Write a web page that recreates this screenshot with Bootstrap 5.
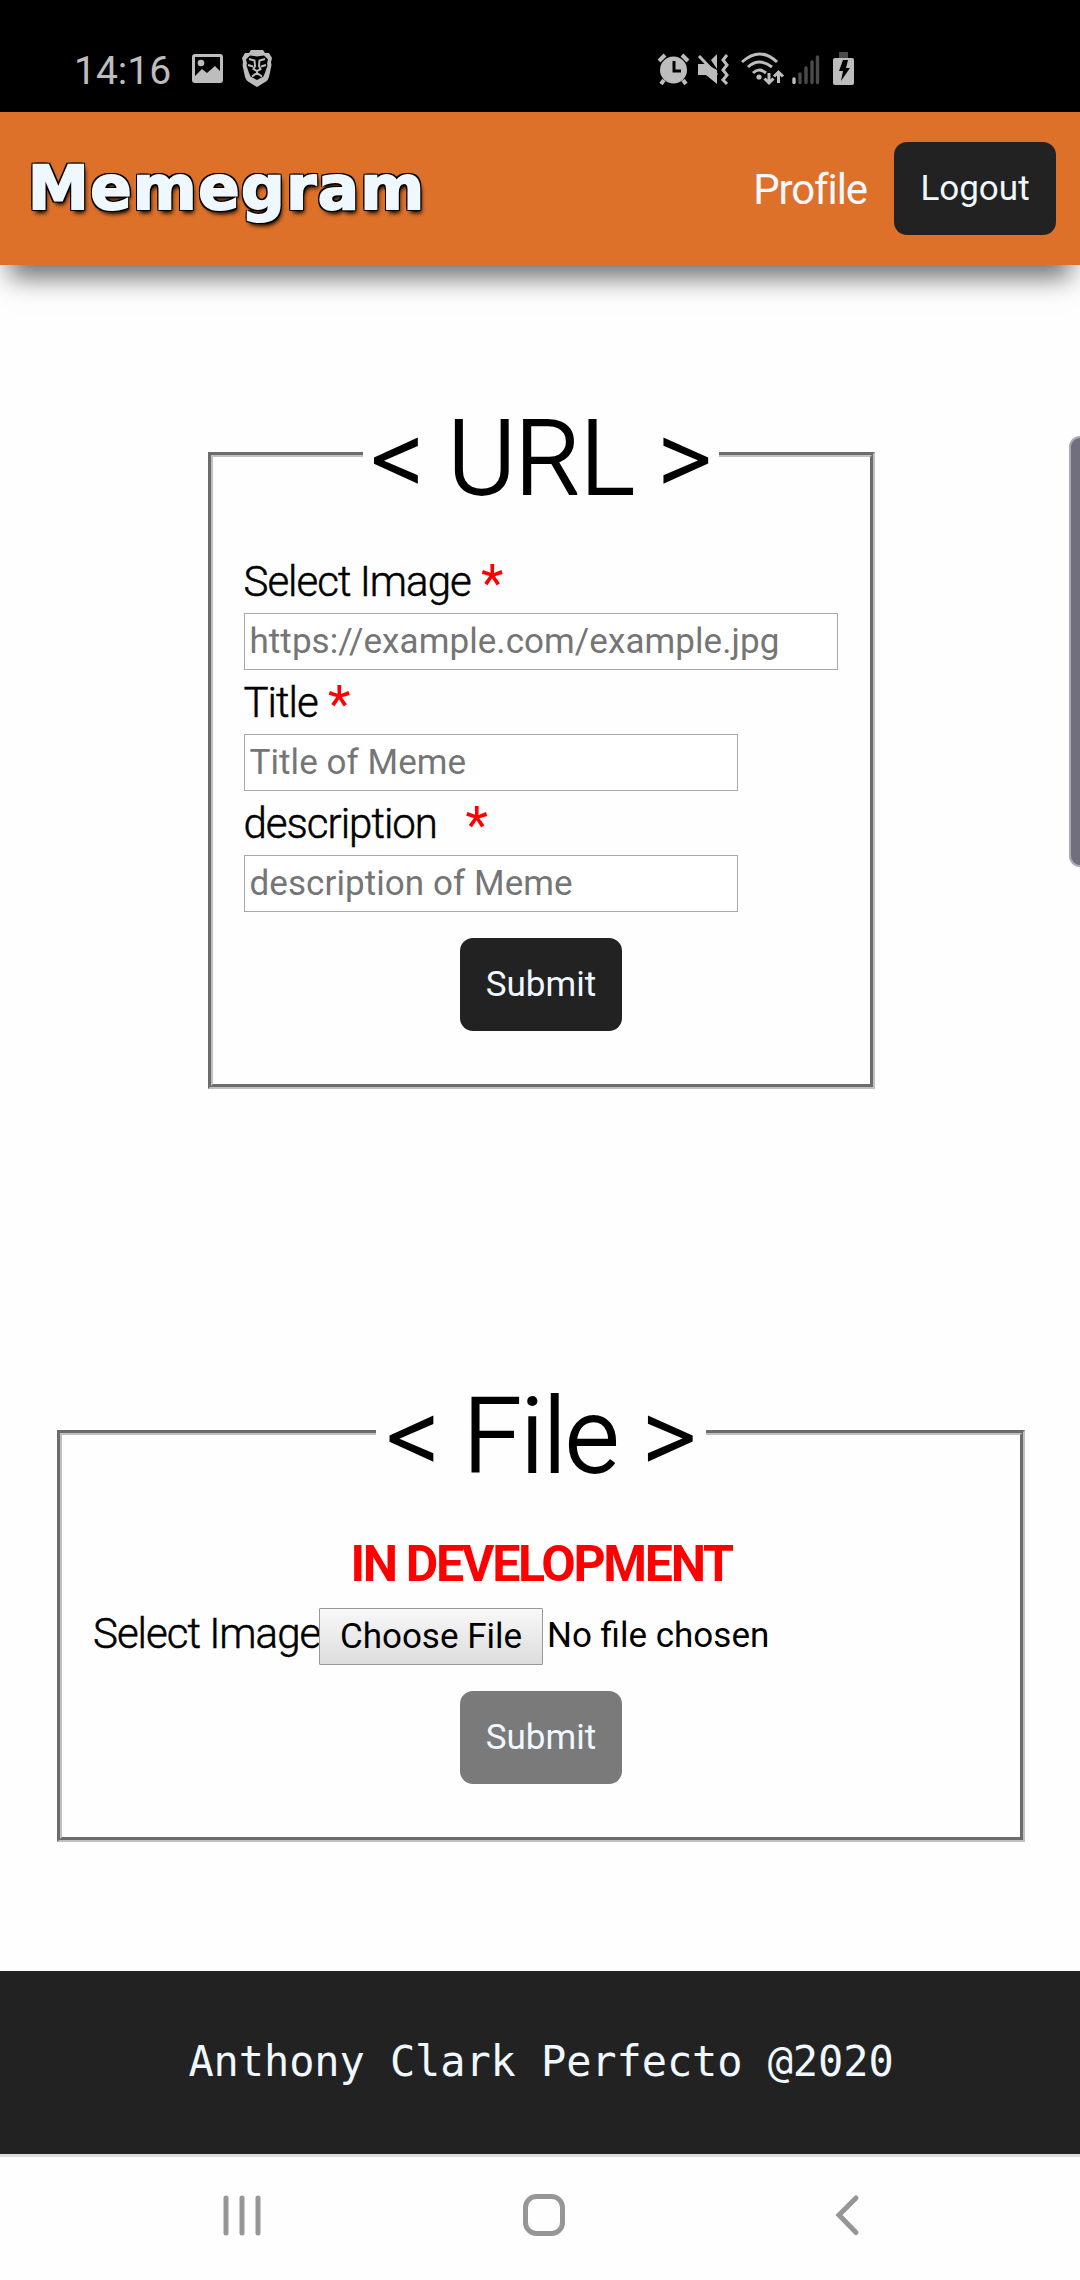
<!DOCTYPE html>
<html lang="en">
<head>
<meta charset="utf-8">
<meta name="viewport" content="width=device-width, initial-scale=1">
<title>Memegram</title>
<link href="https://cdn.jsdelivr.net/npm/bootstrap@5.3.0/dist/css/bootstrap.min.css" rel="stylesheet">
<style>
  body { font-family: Roboto, sans-serif; font-size: 42px; line-height: 64px; color: #000; background: #fefefe; }
  .status-bar { height: 112px; background: #000; color: #bdbdbd; font-size: 39px; line-height: 100px; padding: 21px 0 0 74px; }
  .status-bar svg { display: block; }
  .clock { width: 106px; }
  .top-bar { height: 153px; background: #dd7129; padding: 0 24px 0 28px; box-shadow: 0 22px 24px -9px rgba(0,0,0,.55); }
  .brand { font: bold 61px/70px "DejaVu Sans", sans-serif; color: #f0f8ff; letter-spacing: 1.5px; margin-top: -2px; -webkit-text-stroke: 2px #f0f8ff;
    text-shadow: -2px -2px 0 #000, 2px -2px 0 #000, -2px 2px 0 #000, 2px 2px 0 #000, 0 -2px 0 #000, 0 2px 0 #000, -2px 0 0 #000, 2px 0 0 #000, 2px 4px 4px #000; }
  .profile-link { color: #f0f8ff; letter-spacing: -1.1px; margin-right: 27px; padding-top: 2px; }
  .action-btn { width: 162px; height: 93px; padding: 0; border: 0; border-radius: 13px; background: #222; color: #f0f8ff; font-size: 35px; line-height: 93px; }
  .action-btn:disabled { background: #7a7a7a; color: #f0f8ff; opacity: 1; }
  main { padding: 109px 0 129px 2px; gap: 263px; }
  .panel { border: 5px groove #c0c0c0; padding: 15px 31px 52px; }
  .panel legend { float: none; width: 356px; margin: 0 auto; padding: 9px 0 0; font-size: 104px; line-height: 151px; text-align: center; white-space: nowrap; font-weight: 300; letter-spacing: -1px; -webkit-text-stroke: 1.8px #000; }
  .panel .action-btn { margin-top: 26px; margin-bottom: 1px; }
  .url-panel { width: 667px; }
  .file-panel { width: 968px; }
  .file-panel legend { width: 330px; }
  .field-label { font-weight: 300; letter-spacing: -1px; -webkit-text-stroke: .5px #000; white-space: pre; padding-top: 1px; margin-bottom: -1px; }
  .req { color: #f00; -webkit-text-stroke: 0; font-weight: 400; font-size: 52px; line-height: 1px; vertical-align: -5px; margin-left: 1px; }
  .req.wide { margin-left: 10px; }
  .field { width: 594px; height: 57px; padding: 0 5px; border: 1px solid #a9a9a9; border-radius: 0; font-size: 35px; line-height: 55px; letter-spacing: .07px; background: #fff; }
  .field::placeholder { color: #757575; }
  .field.short { width: 494px; }
  .dev-note { color: #f00; font-size: 50px; line-height: 74px; font-weight: 700; letter-spacing: -2.3px; }
  .file-row { height: 64px; }
  .file-row .field-label { width: 226px; }
  .choose { width: 224px; height: 57px; margin-top: 7px; border: 1px solid #999; border-radius: 1px; background: linear-gradient(#f8f8f8, #ddd); font-size: 35px; line-height: 53px; padding: 0; color: #000; }
  .chosen { font-size: 35px; line-height: 70px; padding-left: 4px; }
  .foot { height: 183px; background: #222; color: #f0f8ff; font: 42px/181px "DejaVu Sans Mono", monospace; padding-left: 2px; letter-spacing: -.1px; }
  .nav-keys { height: 126px; border-top: 3px solid #ddd; }
  .edge-handle { position: absolute; right: 0; top: 436px; width: 11px; height: 431px; background: #716e7d; border: 2px solid #aaa9af; border-right: 0; border-radius: 13px 0 0 13px; }
</style>
</head>
<body>
<div class="status-bar d-flex">
  <span class="clock">14:16</span>
  <svg width="100" height="75" viewBox="180 21 100 75" fill="#bdbdbd">
    <path fill-rule="evenodd" d="M195 54h25q3 0 3 3v23q0 3-3 3h-25q-3 0-3-3V57q0-3 3-3zm0 3v19l7-7 5 4 8-7 5 5V57z"/>
    <circle cx="201" cy="63" r="3.300"/>
    <path d="M251 50h12l2 3h4l3 5-1 4 .5 3-2.500 12q-1 3-3 4.500l-9 5.500-9-5.500q-2-1.500-3-4.500l-2.500-12 .5-3-1-4 3-5h4z"/>
    <path fill="#000" d="M250 55.500l7 1 7-1 4 4-1 4 .5 2-2 6-2 5-6.500 3.500-6.500-3.500-2-5-2-6 .5-2-1-4z"/>
    <path fill="none" stroke="#bdbdbd" stroke-width="2" d="M249 59l5.500 1.500L255 66l-1.500 3 3.500 2 3.500-2L259 66l.5-5.500L265 59M248 65l5 1.500M266 65l-5 1.500M257 71v2l-5 3.500M257 73l5 3.500"/>
  </svg>
  <svg class="ms-auto" width="430" height="70" viewBox="650 21 430 70">
    <g fill="#bdbdbd" stroke="#bdbdbd">
      <circle cx="673.500" cy="70" r="13.500" stroke="none"/>
      <path d="M659 61l6-6M688 61l-6-6M664 80l-3 4M683 80l3 4" stroke-width="4"/>
      <path d="M674 61v10h7" stroke="#000" stroke-width="3" fill="none"/>
      <path d="M698 64h8l11 6v14l-11-9h-8zM717 54v15l-6-9z" stroke="none"/>
      <path d="M699 56l18 19" stroke-width="3"/>
      <path d="M727 55l-4 5 4 5-4 5 4 5-4 5 4 4" fill="none" stroke-width="3"/>
      <g fill="none" stroke-width="3"><path d="M742 62q18-16 35 0M748 67q11-10 24 0M753 73q6-6 13 0"/><path d="M769 73v10M764.500 78.500l4.500 4.500 4.500-4.500M778.500 83V72M774 76.500l4.500-4.500 4.500 4.500"/></g>
      <circle cx="759" cy="77" r="2.600" stroke="none"/>
      <g fill="none" stroke-width="3.400" stroke-linecap="round"><path d="M794 79v3.500"/><path stroke="#4a4a4a" d="M800 74v8.500M806 68v14.500M812 62v20.500M817.500 57v25.500"/></g>
      <path stroke="none" fill="#4a4a4a" d="M839 52h9v6h-9z"/>
      <rect stroke="none" x="833" y="58" width="21" height="27" rx="2"/>
      <path stroke="none" fill="#000" d="M843 60h5l-2 8h4l-9 13 2-10h-4z"/>
    </g>
  </svg>
</div>

<nav class="top-bar d-flex align-items-center position-relative">
  <span class="brand">Memegram</span>
  <a class="profile-link ms-auto text-decoration-none" href="#">Profile</a>
  <button class="btn action-btn">Logout</button>
</nav>

<main class="d-flex flex-column align-items-center">
  <fieldset class="panel url-panel">
    <legend>&lt; URL &gt;</legend>
    <div class="field-label">Select Image <span class="req">*</span></div>
    <input class="form-control field" placeholder="https://example.com/example.jpg">
    <div class="field-label">Title <span class="req">*</span></div>
    <input class="form-control field short" placeholder="Title of Meme">
    <div class="field-label">description  <span class="req wide">*</span></div>
    <input class="form-control field short" placeholder="description of Meme">
    <button class="btn action-btn d-block mx-auto">Submit</button>
  </fieldset>

  <fieldset class="panel file-panel">
    <legend>&lt; File &gt;</legend>
    <div class="dev-note text-center">IN DEVELOPMENT</div>
    <div class="d-flex align-items-start file-row">
      <span class="field-label">Select Image</span>
      <button class="choose">Choose File</button>
      <span class="chosen">No file chosen</span>
    </div>
    <button class="btn action-btn d-block mx-auto" disabled>Submit</button>
  </fieldset>
</main>

<footer class="foot text-center">Anthony Clark Perfecto @2020</footer>
<div class="nav-keys">
  <svg class="d-block" width="1080" height="123" viewBox="0 2157 1080 123" fill="none" stroke="#969696" stroke-width="5" stroke-linecap="round">
    <path d="M226 2198v35M242 2198v35M258 2198v35"/>
    <rect x="525.500" y="2196.500" width="37" height="37" rx="11"/>
    <path d="M856 2198l-17 17 17 17.500"/>
  </svg>
</div>
<div class="edge-handle"></div>
<script src="https://cdn.jsdelivr.net/npm/bootstrap@5.3.0/dist/js/bootstrap.bundle.min.js"></script>
</body>
</html>
